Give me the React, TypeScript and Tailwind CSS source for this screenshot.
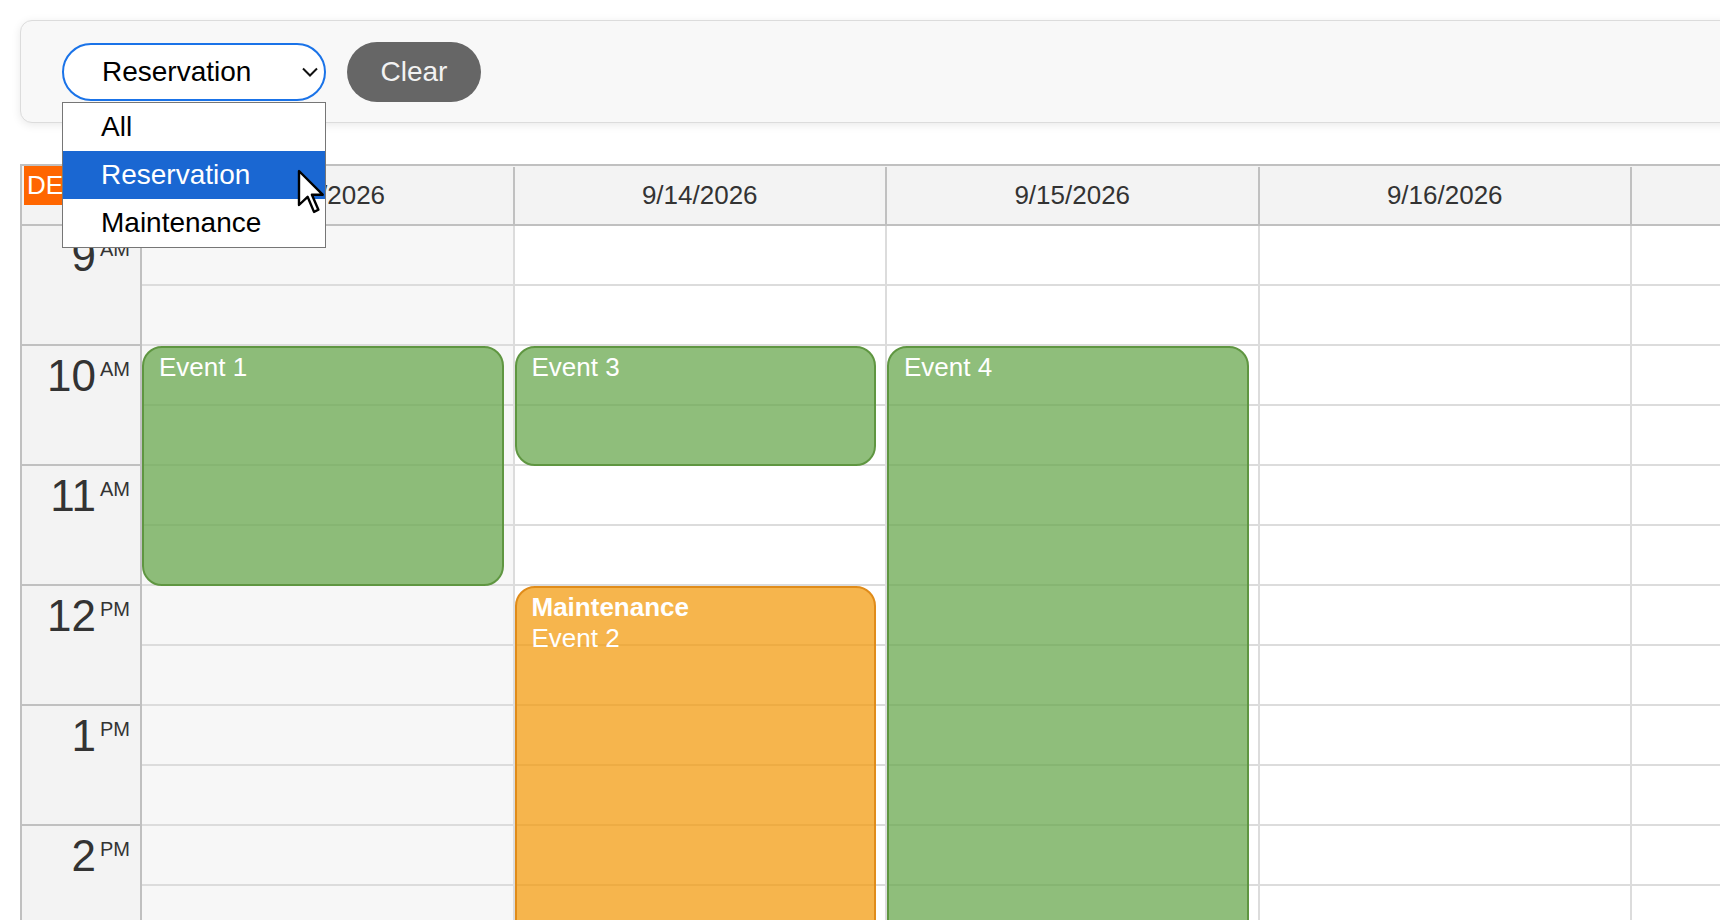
import React from "react";

type Hour = { n: string; ap: string };
type CalEvent = {
  day: number;
  start: number;
  end: number;
  text: string;
  kind: "reservation" | "maintenance";
};

const hours: Hour[] = [
  { n: "9", ap: "AM" },
  { n: "10", ap: "AM" },
  { n: "11", ap: "AM" },
  { n: "12", ap: "PM" },
  { n: "1", ap: "PM" },
  { n: "2", ap: "PM" },
  { n: "3", ap: "PM" },
];

const days = ["9/13/2026", "9/14/2026", "9/15/2026", "9/16/2026", "9/17/2026"];

const events: CalEvent[] = [
  { day: 0, start: 10, end: 12, text: "Event 1", kind: "reservation" },
  { day: 1, start: 10, end: 11, text: "Event 3", kind: "reservation" },
  { day: 1, start: 12, end: 16, text: "Event 2", kind: "maintenance" },
  { day: 2, start: 10, end: 16, text: "Event 4", kind: "reservation" },
];

const HOUR_PX = 120;
const FIRST_HOUR = 9;

const options = ["All", "Reservation", "Maintenance"];

function Toolbar() {
  return (
    <div className="relative z-10 flex h-[103px] items-center gap-[21px] rounded-xl border border-[#dcdcdc] bg-[#f8f8f8] pl-[41px] shadow-[0_2px_10px_rgba(0,0,0,0.09)]">
      {/* filter select, shown open */}
      <div className="relative w-[264px]">
        <div className="flex h-[58px] items-center rounded-full border-2 border-[#1a73e8] bg-white pl-[38px] pt-[1px] text-[28px] text-black">
          <span>Reservation</span>
          <svg className="ml-auto mr-[6px]" width="16" height="10" viewBox="0 0 16 10">
            <polyline points="1,1.5 8,8.5 15,1.5" fill="none" stroke="#111" strokeWidth="2" />
          </svg>
        </div>
        <ul className="absolute left-0 top-[59px] w-full border border-[#767676] bg-white text-[28px] text-black">
          {options.map((o) => (
            <li
              key={o}
              className={`flex h-[48px] items-center pl-[38px] ${
                o === "Reservation" ? "bg-[#1a67d2] text-white" : ""
              }`}
            >
              {o}
            </li>
          ))}
        </ul>
      </div>

      <button className="h-[60px] w-[134px] rounded-full bg-[#666] text-[28px] text-[#f2f2f2]">
        Clear
      </button>
    </div>
  );
}

function EventBox({ ev }: { ev: CalEvent }) {
  const top = (ev.start - FIRST_HOUR) * HOUR_PX;
  const height = (ev.end - ev.start) * HOUR_PX;
  const color =
    ev.kind === "maintenance"
      ? "border-[#e08c1a] bg-[rgba(243,156,18,0.75)]"
      : "border-[#5f9641] bg-[rgba(106,168,79,0.75)]";

  return (
    <div
      className={`absolute left-0 right-[9px] rounded-[20px] border-2 px-[15px] pt-[4px] text-[26px] leading-[31px] text-white ${color}`}
      style={{ top, height }}
    >
      {ev.kind === "maintenance" && <div className="font-bold">Maintenance</div>}
      <div>{ev.text}</div>
    </div>
  );
}

function Calendar() {
  return (
    <div className="mt-[41px] text-[#333]">
      {/* header row */}
      <div className="grid h-[62px] grid-cols-[118px_repeat(5,372.5px)] border-y-2 border-l-2 border-[#c0c0c0] bg-[#f3f3f3] pt-[1px] text-[26px]">
        <div className="relative">
          <span className="absolute left-[2px] -top-[1px] flex h-[39px] items-center bg-[#ff6600] pl-[3px] pr-[5px] text-white">
            DEMO
          </span>
        </div>
        {days.map((d) => (
          <div key={d} className="flex items-center justify-center border-l-2 border-[#c0c0c0]">
            {d}
          </div>
        ))}
      </div>

      {/* time grid */}
      <div className="grid grid-cols-[118px_repeat(5,372.5px)] border-l-2 border-[#c0c0c0]">
        <div className="bg-[#f3f3f3]">
          {hours.map((h) => (
            <div
              key={h.n + h.ap}
              className="flex h-[120px] justify-end border-b-2 border-[#c0c0c0] pr-[10px] pt-[8px]"
            >
              <span className="text-[44px] leading-none">{h.n}</span>
              <span className="ml-[4px] mt-[5px] text-[20px] leading-none">{h.ap}</span>
            </div>
          ))}
        </div>

        {days.map((d, i) => (
          <div
            key={d}
            className={`relative border-l-2 ${
              i === 0 ? "border-[#c0c0c0] bg-[#f7f7f7]" : "border-[#dcdcdc] bg-white"
            }`}
          >
            {hours.map((h) => (
              <React.Fragment key={h.n + h.ap}>
                <div className="h-[60px] border-b-2 border-[#dcdcdc]" />
                <div className="h-[60px] border-b-2 border-[#dcdcdc]" />
              </React.Fragment>
            ))}
            {events
              .filter((ev) => ev.day === i)
              .map((ev) => (
                <EventBox key={ev.text} ev={ev} />
              ))}
          </div>
        ))}
      </div>
    </div>
  );
}

export default function App() {
  return (
    <div className="relative h-screen w-screen overflow-hidden bg-white font-['Liberation_Sans',Arial,sans-serif]">
      <div className="w-[2010px] pl-5 pt-5">
        <Toolbar />
        <Calendar />
      </div>

      {/* mouse pointer over the open list */}
      <svg
        className="pointer-events-none absolute left-[297px] top-[169px] z-50"
        width="28"
        height="45"
        viewBox="-2 -2 28 45"
      >
        <polygon
          points="0,0 0,34 8.6,25.8 15,40.9 19.4,38.7 12.9,23.7 23.7,23.7"
          fill="#fff"
          stroke="#000"
          strokeWidth="2.4"
          strokeLinejoin="round"
        />
      </svg>
    </div>
  );
}
